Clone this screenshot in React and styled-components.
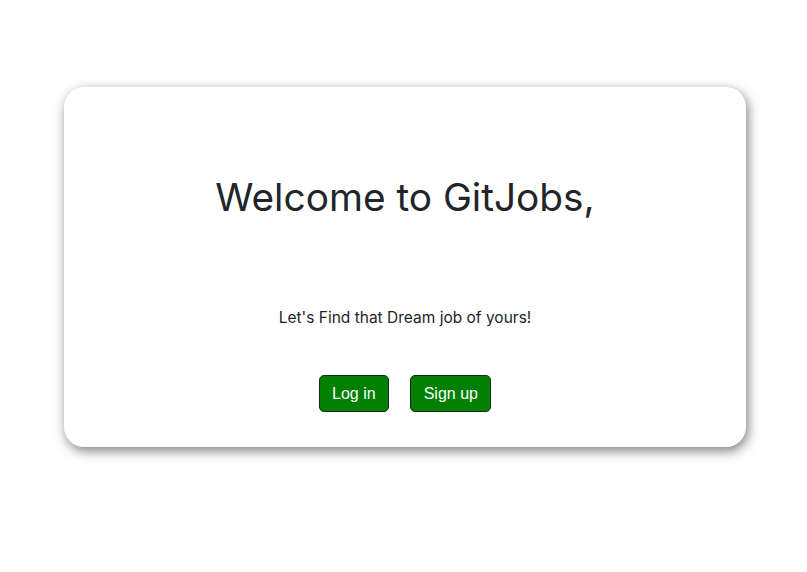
import React from "react";
import styled, { createGlobalStyle } from "styled-components";

const GlobalStyle = createGlobalStyle`
  html, body {
    margin: 0;
    min-height: 100%;
    background: #ffffff;
    font-family: Inter, "Noto Sans", sans-serif;
    color: #212529;
  }
`;

const Page = styled.main`
  min-height: 100vh;
  box-sizing: border-box;
  padding: 87px 61px 40px 64px;
`;

const Card = styled.section`
  height: 360px;
  box-sizing: border-box;
  background: #ffffff;
  border-radius: 20px;
  box-shadow: 2px 4px 12px rgba(0, 0, 0, 0.5);
  display: flex;
  flex-direction: column;
  align-items: center;
  padding-top: 86px;

  h1 {
    margin: 0;
    font-size: 38.8px;
    font-weight: 400;
    line-height: 48px;
    letter-spacing: 0;
  }

  p {
    margin: 85px 0 0;
    font-size: 15.5px;
    line-height: 24px;
  }
`;

const Actions = styled.div`
  display: flex;
  gap: 21px;
  margin-top: 45px;
`;

const Button = styled.button`
  height: 37px;
  padding: 0 12.5px;
  background: #008000;
  color: #ffffff;
  border: 1px solid #1a2a1a;
  border-radius: 5px;
  font-family: "Liberation Sans", Arial, sans-serif;
  font-size: 16px;
  cursor: pointer;
`;

export default function App() {
  return (
    <>
      <GlobalStyle />
      <Page>
        <Card>
          <h1>Welcome to GitJobs,</h1>
          <p>Let's Find that Dream job of yours!</p>
          <Actions>
            <Button>Log in</Button>
            <Button>Sign up</Button>
          </Actions>
        </Card>
      </Page>
    </>
  );
}
